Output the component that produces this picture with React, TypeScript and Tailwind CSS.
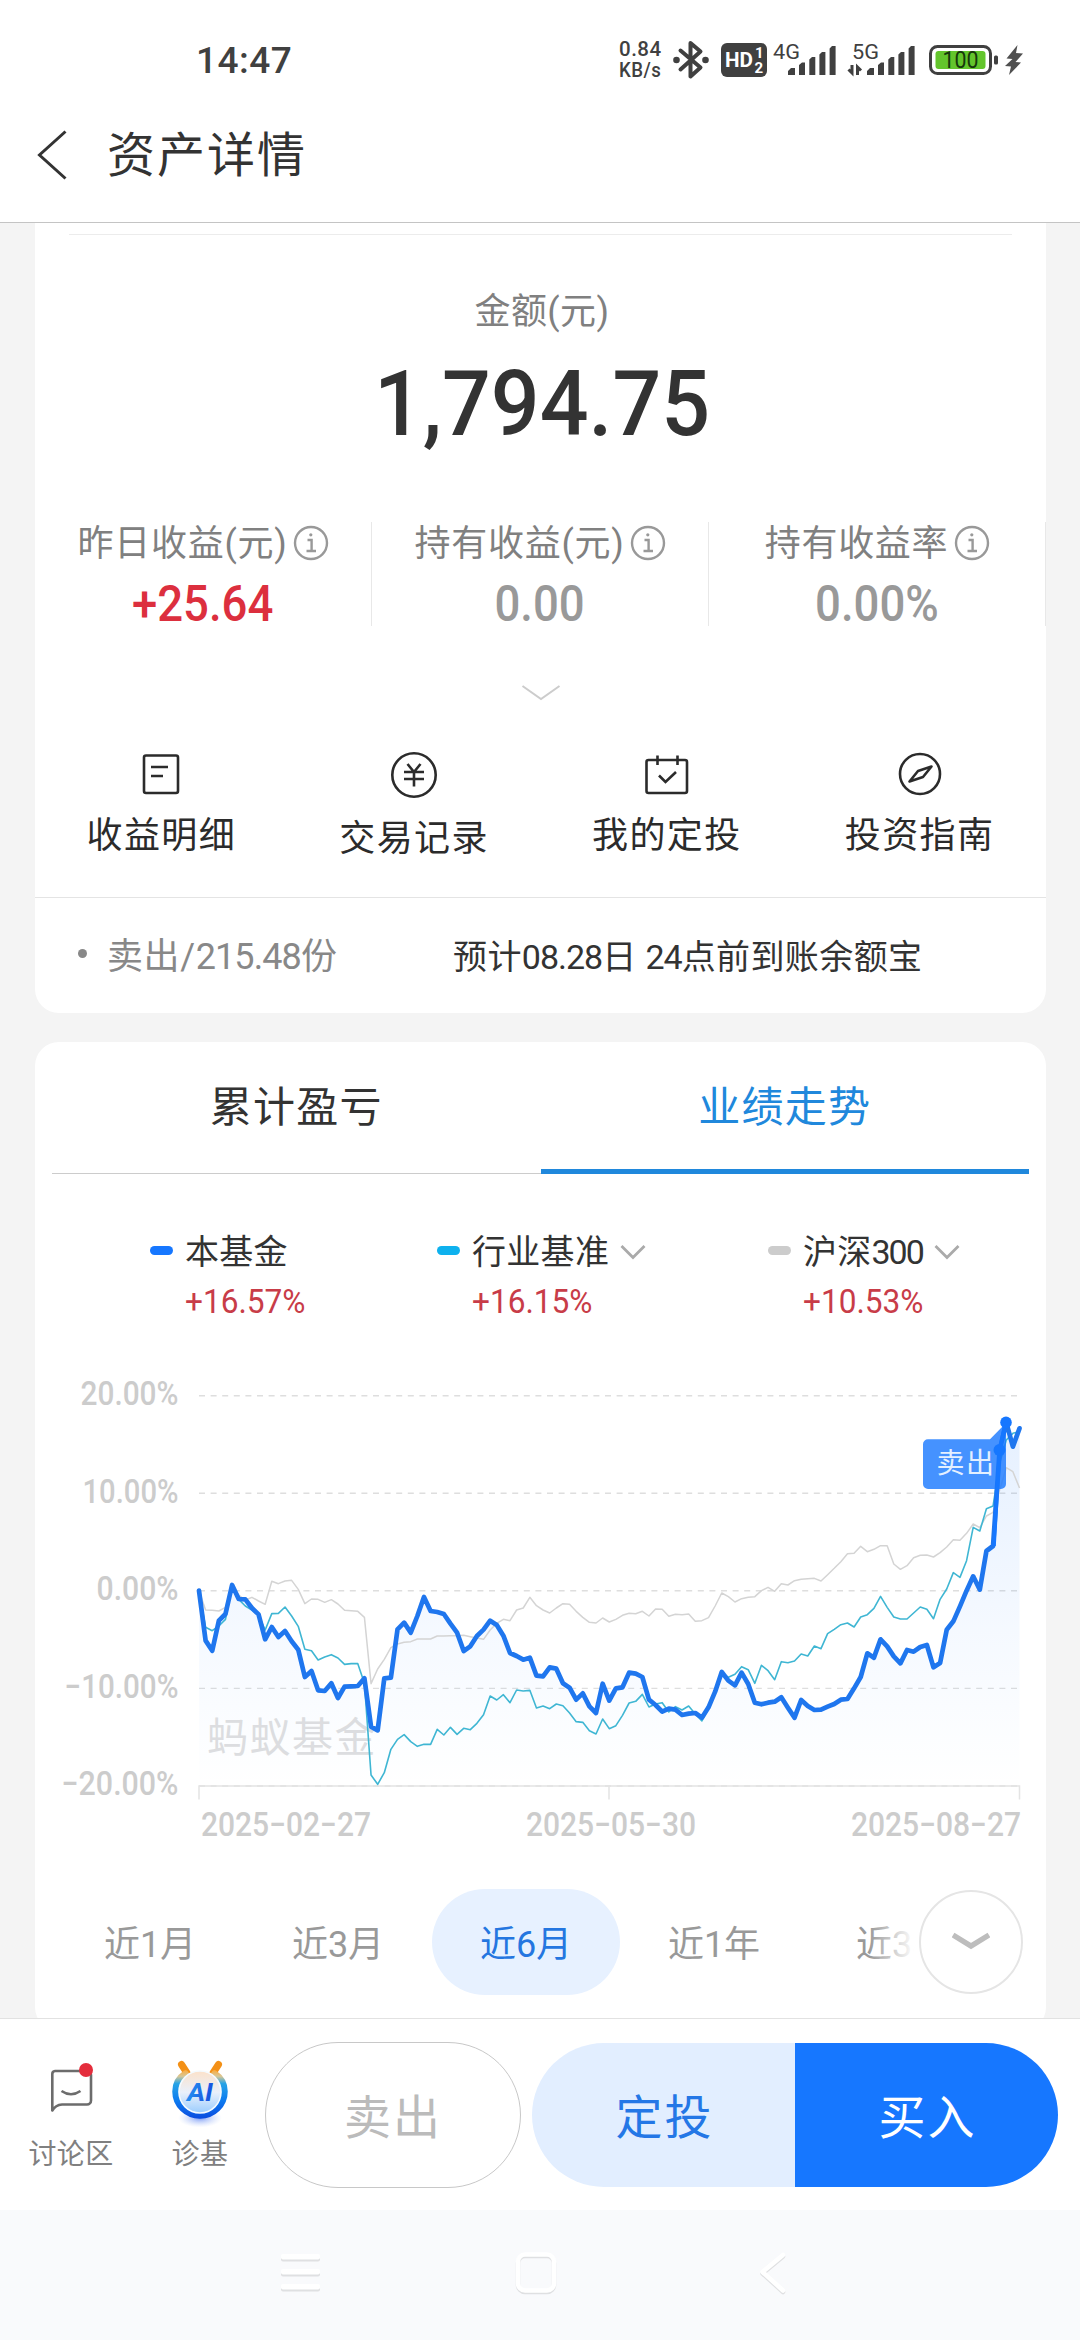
import type { ReactNode } from "react";

const FUND = [
  662, 812, 842, 752, 732, 645, 687, 688, 714, 733, 808, 771, 801, 783, 814, 839, 921, 903, 961, 963, 940, 984, 950,
  949, 948, 925, 1070, 1081, 925, 923, 778, 758, 788, 738, 681, 723, 726, 732, 761, 788, 843, 829, 798, 779, 752, 765,
  797, 849, 858, 869, 863, 917, 919, 892, 896, 940, 953, 989, 970, 1009, 1029, 941, 992, 955, 952, 908, 911, 921, 989,
  1005, 1025, 1016, 1019, 1035, 1031, 1029, 1043, 1012, 965, 906, 932, 946, 908, 942, 998, 1003, 998, 995, 982, 1013,
  1043, 990, 1008, 1020, 1019, 1010, 1002, 989, 987, 955, 921, 850, 863, 808, 829, 859, 880, 840, 845, 831, 825, 892,
  879, 779, 754, 709, 662, 619, 659, 543, 528, 240, 157, 230, 175,
];

const SECTOR = [
  662, 772, 782, 768, 748, 650, 688, 708, 720, 735, 780, 731, 730, 711, 738, 769, 838, 842, 870, 861, 854, 864, 883,
  881, 881, 940, 1215, 1243, 1208, 1138, 1108, 1094, 1115, 1129, 1123, 1123, 1078, 1095, 1072, 1093, 1075, 1079, 1060,
  1034, 978, 990, 974, 998, 960, 963, 961, 1014, 1008, 1016, 1002, 1007, 1029, 1055, 1057, 1082, 1092, 1047, 1076,
  1067, 1036, 999, 994, 973, 1011, 1002, 998, 1026, 1010, 1020, 1008, 1032, 1053, 1015, 968, 908, 922, 913, 890, 899,
  940, 886, 902, 929, 875, 878, 873, 852, 858, 828, 836, 791, 778, 764, 759, 771, 741, 734, 715, 679, 712, 741, 747,
  747, 729, 711, 718, 746, 688, 657, 608, 622, 572, 472, 483, 416, 408, 280, 210, 190, 185,
];

const CSI300 = [
  662, 720, 721, 723, 712, 650, 675, 690, 682, 693, 703, 634, 641, 633, 631, 658, 701, 687, 688, 697, 689, 702, 721,
  722, 724, 742, 941, 897, 868, 833, 822, 817, 815, 807, 807, 807, 798, 798, 797, 797, 796, 800, 804, 808, 780, 760,
  748, 752, 720, 714, 682, 707, 720, 729, 714, 701, 703, 724, 742, 757, 759, 744, 756, 748, 736, 730, 731, 724, 738,
  717, 718, 739, 733, 734, 732, 754, 752, 743, 708, 669, 680, 696, 686, 682, 680, 662, 652, 664, 641, 645, 632, 628,
  626, 625, 633, 614, 595, 575, 551, 550, 529, 545, 538, 527, 527, 582, 598, 587, 563, 556, 555, 561, 548, 531, 509,
  511, 490, 462, 473, 438, 427, 360, 293, 305, 354,
];

const px = (i: number) => (199 + i * 6.617).toFixed(2);
const py = (v: number) => (1370 + v / 3).toFixed(2);
const line = (data: number[]) => data.map((v, i) => `${px(i)},${py(v)}`).join(" ");

function StatusBar() {
  return (
    <div className="flex h-[120px] shrink-0 items-center pr-[56px] pl-[196px] text-[#404040]">
      <span className="text-[37px] leading-none font-medium tracking-[0.5px]">14:47</span>
      <div className="ml-auto flex items-center">
        <div className="mr-[10px] flex w-[44px] flex-col text-[20.5px] leading-[21px] font-medium tracking-[0.5px]">
          <span>0.84</span>
          <span className="origin-left scale-x-[0.91]">KB/s</span>
        </div>
        <svg className="mr-[12px]" width="36" height="40" viewBox="672 39 36 40" fill="none">
          <path
            d="M679.5 49.5 L699.5 66.5 L689.5 75.5 V42 L699.5 50.5 L679.5 68.5"
            stroke="#404040"
            strokeWidth="4"
            strokeLinejoin="round"
            strokeLinecap="round"
          />
          <circle cx="675.5" cy="59" r="3.3" fill="#404040" />
          <circle cx="704.5" cy="59" r="3.3" fill="#404040" />
        </svg>
        <svg className="mr-[6px]" width="46" height="34" viewBox="0 0 46 34" fontFamily="Roboto" fill="#fff">
          <rect width="46" height="34" rx="6" fill="#404040" />
          <text x="4" y="24" fontSize="20" fontWeight="700" textLength="28" lengthAdjust="spacingAndGlyphs">
            HD
          </text>
          <text x="34" y="15" fontSize="15" fontWeight="700">
            1
          </text>
          <text x="33.5" y="30" fontSize="15" fontWeight="700">
            2
          </text>
        </svg>
        <Signal label="4G" />
        <Signal label="5G" arrows />
        <svg className="mr-[5px]" width="70" height="30" viewBox="0 0 70 30">
          <rect x="1.5" y="1.5" width="60" height="27" rx="7" fill="none" stroke="#404040" strokeWidth="3" />
          <rect x="6.5" y="6" width="50" height="18" rx="3" fill="#63c52c" />
          <rect x="65" y="10.5" width="4" height="9" rx="1.5" fill="#404040" />
          <text
            x="13.5"
            y="23"
            fontSize="23"
            fontFamily="Roboto"
            fill="#16380b"
            textLength="36"
            lengthAdjust="spacingAndGlyphs"
          >
            100
          </text>
        </svg>
        <svg width="20" height="30" viewBox="0 0 20 30" fill="#505050">
          <path d="M13.5 0 L2.5 13.5 L8.5 14 L1 21 L7 21.5 L5 30 L17 17.5 L11.5 17 L19 8.5 L12 8 Z" />
        </svg>
      </div>
    </div>
  );
}

function Signal({ label, arrows }: { label: string; arrows?: boolean }) {
  return (
    <svg
      className={arrows ? "mr-[12px]" : "mr-[10px]"}
      width={arrows ? 70 : 64}
      height="46"
      viewBox={arrows ? "-5 36 70 46" : "0 36 64 46"}
      fill="#404040"
    >
      <text x={0} y="57.5" fontSize="20" fontFamily="Roboto" textLength="27" lengthAdjust="spacingAndGlyphs">
        {label}
      </text>
      <path d="M15 74 V70 L18 67 H22 V74Z M26 74 V64 L29 61.5 H32 V74Z M36.3 74 V58.5 L39 56 H42.3 V74Z M46.4 74 V53.5 L49 51 H52.4 V74Z M56.6 74 V47.5 L59 45 H62.6 V74Z" />
      {arrows && (
        <path d="M0 64 V72 L-3.5 68.5 M5.5 74 V66 L9 69.5" stroke="#404040" strokeWidth="3" fill="none" />
      )}
    </svg>
  );
}

function Info() {
  return (
    <svg className="ml-[6px]" width="36" height="36" viewBox="0 0 36 36" fill="none" stroke="#999" strokeWidth="2.4">
      <circle cx="18" cy="18" r="16" />
      <path d="M14.5 15 H18.6 V26 M13.5 26 H23" />
      <circle cx="17.8" cy="9.8" r="1.6" fill="#999" stroke="none" />
    </svg>
  );
}

function Stat({ label, value, tone }: { label: string; value: string; tone: string }) {
  return (
    <div className="flex h-[104px] w-[337px] flex-col items-center border-r border-[#e8e8e8]">
      <div className="flex h-[42px] shrink-0 items-center pl-[1px] text-[36px] leading-none tracking-[0.7px] text-[#808080]">
        <span className="pt-[2px]">{label}</span>
        <Info />
      </div>
      <div className={`mt-[15px] flex h-[50px] shrink-0 scale-x-[0.91] items-center text-[50px] leading-none font-medium ${tone}`}>
        {value}
      </div>
    </div>
  );
}

function Shortcut({ label, children, drop }: { label: string; children: ReactNode; drop?: boolean }) {
  return (
    <div className="flex flex-1 flex-col items-center text-[#2b2b2b]">
      <svg width="50" height="50" viewBox="-25 -25 50 50" fill="none" stroke="#2b2b2b" strokeWidth="2.6">
        {children}
      </svg>
      <span className={`text-[36px] leading-[40px] tracking-[1.4px] ${drop ? "mt-[20px]" : "mt-[17px]"}`}>{label}</span>
    </div>
  );
}

function AssetCard() {
  return (
    <section className="mx-[35px] h-[790px] w-[1011px] shrink-0 rounded-b-[24px] bg-white">
      <div className="mx-[34px] h-[12px] border-b border-[#ececec]" />
      <div className="flex h-[287px] flex-col items-center">
        <div className="mt-[57px] flex h-[40px] items-center pl-[3px] text-[36px] leading-none tracking-[0.4px] text-[#808080]">
          金额(元)
        </div>
        <div className="mt-[28px] ml-[4px] flex h-[90px] scale-x-[0.955] items-center text-[90px] leading-none font-medium text-[#333]">
          1,794.75
        </div>
      </div>
      <div className="flex">
        <Stat label="昨日收益(元)" value="+25.64" tone="text-[#dc2f3e]" />
        <Stat label="持有收益(元)" value="0.00" tone="text-[#999]" />
        <Stat label="持有收益率" value="0.00%" tone="text-[#999]" />
      </div>
      <div className="flex h-[123px] justify-center pt-[58px]">
        <svg width="40" height="18" viewBox="0 0 40 18" fill="none" stroke="#ccc" strokeWidth="2">
          <path d="M1.5 2 L20 15 L38.5 2" />
        </svg>
      </div>
      <div className="flex h-[148px]">
        <Shortcut label="收益明细">
          <rect x="-17" y="-18.5" width="34" height="37.5" rx="2" />
          <path d="M-10 -7 H7 M-10 2 H2" />
        </Shortcut>
        <Shortcut label="交易记录" drop>
          <circle r="21.7" cy="1" />
          <path d="M-6.5 -10 L0 -2 L6.5 -10 M0 -2 V12.5 M-10 -2 H10 M-10 5 H10" />
        </Shortcut>
        <Shortcut label="我的定投">
          <rect x="-20.5" y="-14" width="40.5" height="33" rx="2" />
          <path d="M-9.5 -18.5 V-9 M10.5 -18.5 V-9 M-8 1.5 L-1.5 8 L9 -2" />
        </Shortcut>
        <Shortcut label="投资指南">
          <circle r="20" />
          <path d="M11.5 -7.5 L-2 -3 L-10.5 7.5 L3 3 Z" strokeLinejoin="round" />
        </Shortcut>
      </div>
      <div className="flex h-[116px] items-center border-t border-[#e4e4e4] pt-[3px] leading-none">
        <span className="ml-[43px] size-[9px] -translate-y-[4px] rounded-full bg-[#888]" />
        <span className="ml-[20px] w-[346px] text-[36px] tracking-[0.6px] text-[#888]">
          卖出/<span className="tracking-[-0.9px]">215.48</span>份
        </span>
        <span className="text-[34px] tracking-[0.4px] text-[#333]">
          预计<span className="tracking-[-1px]">08.28</span>日 <span className="tracking-[-1px]">24</span>点前到账余额宝
        </span>
      </div>
    </section>
  );
}

function Legend({
  color,
  name,
  digits,
  value,
  menu,
  className,
}: {
  color: string;
  name: string;
  digits?: string;
  value: string;
  menu?: boolean;
  className: string;
}) {
  return (
    <div className={`flex ${className}`}>
      <span className={`mt-[15px] h-[9px] w-[23px] rounded-full ${color}`} />
      <div className="ml-[12px] flex flex-col">
        <div className="flex h-[42px] items-center text-[34px] leading-none tracking-[0.3px] text-[#333]">
          {name}
          {digits && <span className="tracking-[-2.1px]">{digits}</span>}
          {menu && (
            <svg className="ml-[11px]" width="26" height="18" viewBox="0 0 26 18" fill="none" stroke="#aaa" strokeWidth="2.8">
              <path d="M1.5 3 L13 14.5 L24.5 3" />
            </svg>
          )}
        </div>
        <span className="mt-[8px] inline-block w-[120px] origin-left scale-x-[0.93] text-[34px] leading-[40px] text-[#c83c48]">
          {value}
        </span>
      </div>
    </div>
  );
}

const GRID = [1395.7, 1493.3, 1590.8, 1688.4, 1786];
const Y_LABELS = [
  { t: "20.00%", w: 98 },
  { t: "10.00%", w: 96 },
  { t: "0.00%", w: 82 },
  { t: "−10.00%", w: 114 },
  { t: "−20.00%", w: 117 },
];
const X_LABELS = [
  { t: "2025−02−27", x: 201 },
  { t: "2025−05−30", x: 526 },
  { t: "2025−08−27", x: 851 },
];

function Chart() {
  return (
    <svg className="block" width="1011" height="480" viewBox="35 1370 1011 480" fontFamily="Roboto, 'Noto Sans CJK SC', sans-serif">
      <defs>
        <linearGradient id="fill" x1="0" y1="1422" x2="0" y2="1786" gradientUnits="userSpaceOnUse">
          <stop offset="0" stopColor="#1677ff" stopOpacity="0.11" />
          <stop offset="0.6" stopColor="#1677ff" stopOpacity="0.04" />
          <stop offset="1" stopColor="#1677ff" stopOpacity="0" />
        </linearGradient>
      </defs>
      {GRID.map((y) => (
        <line key={y} x1="199" x2="1019.5" y1={y} y2={y} stroke="#dedede" strokeWidth="1.4" strokeDasharray="6 5.6" />
      ))}
      <path d="M199 1799.5 V1786 H1019.5 V1799.5 M609 1786 V1799.5" stroke="#e4e4e4" strokeWidth="1.5" fill="none" />
      {Y_LABELS.map((l, i) => (
        <text
          key={l.t}
          x={178.5 - l.w}
          y={GRID[i] + 9.3}
          fontSize="33"
          fontWeight="500"
          fill="#ccc"
          textLength={l.w}
          lengthAdjust="spacingAndGlyphs"
        >
          {l.t}
        </text>
      ))}
      {X_LABELS.map((l) => (
        <text
          key={l.t}
          x={l.x}
          y="1835.5"
          fontSize="33"
          fontWeight="500"
          fill="#ccc"
          textLength="170"
          lengthAdjust="spacingAndGlyphs"
        >
          {l.t}
        </text>
      ))}
      <polygon points={`199,1786 ${line(FUND)} 1019.5,1786`} fill="url(#fill)" />
      <text x="207" y="1751.5" fontSize="41" letterSpacing="1.5" fill="#dcdde0">
        蚂蚁基金
      </text>
      <polyline points={line(CSI300)} fill="none" stroke="#d4d4d4" strokeWidth="1.5" strokeLinejoin="round" />
      <polyline points={line(SECTOR)} fill="none" stroke="#3fb6d3" strokeWidth="1.6" strokeLinejoin="round" />
      <polyline
        points={line(FUND)}
        fill="none"
        stroke="#1f76ee"
        strokeWidth="4.7"
        strokeLinejoin="round"
        strokeLinecap="round"
      />
      <path
        d="M928 1439.3 H990 L1006 1423 V1484 a5 5 0 0 1 -5 5 H928 a5 5 0 0 1 -5 -5 V1444.3 a5 5 0 0 1 5 -5Z"
        fill="#1677ff"
        fillOpacity="0.8"
      />
      <text x="936.5" y="1473" fontSize="28" letterSpacing="1.6" fill="#e4f0ff">
        卖出
      </text>
      <path d={`M994 1546 L${px(121)} 1450 L1005 1424`} stroke="#1677ff" strokeWidth="3.6" fill="none" />
      <circle cx="999.5" cy="1450" r="6" fill="#1677ff" />
      <circle cx="1006" cy="1422.4" r="5.8" fill="#1677ff" />
    </svg>
  );
}

function PerformanceCard() {
  return (
    <section className="mx-[35px] mt-[29px] h-[989px] w-[1011px] shrink-0 rounded-[24px] bg-white">
      <div className="mx-[17px] flex h-[132px] text-[42px] leading-none tracking-[1.2px]">
        <div className="flex flex-1 items-center justify-center border-b border-[#ccc] pt-[1px] text-[#333]">累计盈亏</div>
        <div className="flex flex-1 items-center justify-center border-b-[5px] border-[#2088dc] pt-[5px] text-[#2088dc]">
          业绩走势
        </div>
      </div>
      <div className="flex h-[196px] pt-[57px]">
        <Legend className="ml-[115px] w-[287px]" color="bg-[#1677ff]" name="本基金" value="+16.57%" />
        <Legend className="w-[331px]" color="bg-[#0eb1ee]" name="行业基准" value="+16.15%" menu />
        <Legend className="" color="bg-[#ccc]" name="沪深" digits="300" value="+10.53%" menu />
      </div>
      <Chart />
      <div className="relative mt-[39px] flex h-[106px] items-center text-[36px] leading-none text-[#999]">
        <div className="flex w-[1011px] pl-[21px]">
          <Range label="近1月" />
          <Range label="近3月" />
          <Range label="近6月" active />
          <Range label="近1年" />
          <Range label="近3年" />
        </div>
        <div className="absolute top-0 left-[834px] h-full w-[130px] bg-linear-to-r from-white/0 to-white to-35%" />
        <div className="absolute top-[1px] left-[884px] flex size-[104px] items-center justify-center rounded-full border-2 border-[#e5e5e5] bg-white">
          <svg width="38" height="22" viewBox="0 0 38 22" fill="none" stroke="#bdbdbd" strokeWidth="5.5">
            <path d="M1 4 L19 15 L37 4" />
          </svg>
        </div>
      </div>
    </section>
  );
}

function Range({ label, active }: { label: string; active?: boolean }) {
  return (
    <div
      className={`flex h-[106px] w-[188px] shrink-0 items-center justify-center rounded-full pt-[5px] ${
        active ? "bg-[#e7f1ff] text-[#2476e0]" : ""
      }`}
    >
      {label}
    </div>
  );
}

function ActionBar() {
  return (
    <footer className="flex h-[192px] shrink-0 border-t border-[#e2e2e2] bg-white leading-none">
      <div className="ml-[21px] flex w-[100px] flex-col items-center pt-[40px] text-[28px] text-[#808080]">
        <svg width="60" height="68" viewBox="41 2059 60 68" fill="none">
          <path
            d="M55 2071 H87 a4 4 0 0 1 4 4 V2100.5 a4 4 0 0 1 -4 4 H62 Q55.5 2105 52.3 2110.5 V2074 a3 3 0 0 1 2.7 -3Z"
            stroke="#6c6c6c"
            strokeWidth="2.6"
            strokeLinejoin="round"
          />
          <path d="M61.5 2091 Q71 2097.5 80.5 2091" stroke="#6c6c6c" strokeWidth="2.6" />
          <circle cx="86" cy="2070" r="7" fill="#e42d3c" />
        </svg>
        <span className="mt-[14px] tracking-[0.4px]">讨论区</span>
      </div>
      <div className="ml-[29px] flex w-[100px] flex-col items-center pt-[40px] text-[28px] text-[#808080]">
        <svg width="60" height="68" viewBox="170 2060 60 68" fill="none">
          <defs>
            <linearGradient id="ring" x1="0" y1="2070" x2="0" y2="2122" gradientUnits="userSpaceOnUse">
              <stop offset="0" stopColor="#ffa52e" />
              <stop offset="0.14" stopColor="#d9c795" />
              <stop offset="0.28" stopColor="#27a4e6" />
              <stop offset="0.6" stopColor="#0d7cf0" />
              <stop offset="1" stopColor="#0b46dd" />
            </linearGradient>
            <linearGradient id="glass" x1="0" y1="2074" x2="0" y2="2117" gradientUnits="userSpaceOnUse">
              <stop offset="0" stopColor="#fae3cf" />
              <stop offset="0.45" stopColor="#e9f0fb" />
              <stop offset="1" stopColor="#90c8ff" />
            </linearGradient>
            <radialGradient id="glow">
              <stop offset="0" stopColor="#7d9cf5" />
              <stop offset="1" stopColor="#c9d8fb" stopOpacity="0" />
            </radialGradient>
            <linearGradient id="ai" x1="0" y1="0" x2="1" y2="0.3">
              <stop offset="0" stopColor="#2ba3f7" />
              <stop offset="1" stopColor="#1650de" />
            </linearGradient>
          </defs>
          <ellipse cx="200" cy="2119" rx="22" ry="9.5" fill="url(#glow)" />
          <path d="M181.5 2065.5 L187 2074 M218.5 2065.5 L213 2074" stroke="#f39016" strokeWidth="7" strokeLinecap="round" />
          <path
            d="M185.5 2074.5 Q175.5 2081 175.5 2092.5 A24.5 24 0 0 0 224.5 2092.5 Q224.5 2081 214.5 2074.5"
            stroke="url(#ring)"
            strokeWidth="6.5"
            strokeLinecap="round"
          />
          <circle cx="200" cy="2093" r="21" fill="url(#glass)" stroke="#f4faff" strokeWidth="1.6" />
          <text
            x="187"
            y="2102"
            fontSize="26"
            fontFamily="Roboto"
            fontWeight="700"
            fontStyle="italic"
            fill="url(#ai)"
            textLength="26"
            lengthAdjust="spacingAndGlyphs"
          >
            AI
          </text>
        </svg>
        <span className="mt-[14px] tracking-[0.4px]">诊基</span>
      </div>
      <div className="mt-[23px] ml-[15px] flex h-[146px] w-[256px] items-center justify-center rounded-full border border-[#c8c8c8] pt-[4px] text-[47px] tracking-[2px] text-[#bbb]">
        卖出
      </div>
      <div className="mt-[24px] ml-[11px] flex h-[144px] w-[526px] overflow-hidden rounded-full text-[47px] tracking-[2px]">
        <div className="flex flex-1 items-center justify-center bg-[#e2eeff] pt-[4px] pl-[2px] text-[#2477e6]">定投</div>
        <div className="flex flex-1 items-center justify-center bg-[#1677ff] pt-[4px] pl-[2px] text-white">买入</div>
      </div>
    </footer>
  );
}

function NavBar() {
  return (
    <div className="flex h-[130px] shrink-0 items-start bg-[#f9fafc] pt-[38px]">
      <svg className="ml-[276px]" width="50" height="52" viewBox="276 2248 50 52">
        {[2254, 2269, 2284].map((y) => (
          <g key={y}>
            <rect x="281" y={y + 2} width="39" height="5.5" rx="2" fill="#dfe0e2" />
            <rect x="281" y={y} width="39" height="5.5" rx="2" fill="#fff" />
          </g>
        ))}
      </svg>
      <svg className="ml-[185px]" width="50" height="52" viewBox="511 2248 50 52" fill="none" strokeWidth="4.5">
        <rect x="518" y="2256" width="36" height="36" rx="7" stroke="#dfe0e2" />
        <rect x="518" y="2254.5" width="36" height="36" rx="7" stroke="#fff" />
      </svg>
      <svg
        className="ml-[187px]"
        width="50"
        height="52"
        viewBox="748 2248 50 52"
        fill="none"
        strokeWidth="4.5"
        strokeLinecap="round"
        strokeLinejoin="round"
      >
        <path d="M783 2256.5 L762.5 2273.5 L783 2292" stroke="#dfe0e2" />
        <path d="M783 2255 L762.5 2272 L783 2290.5" stroke="#fff" />
      </svg>
    </div>
  );
}

export default function App() {
  return (
    <div className="flex h-[2340px] w-[1080px] flex-col overflow-hidden bg-white font-[Roboto,'Noto_Sans_CJK_SC',sans-serif]">
      <StatusBar />
      <header className="flex h-[103px] shrink-0 items-start border-b border-[#c4c4c4] text-[#333]">
        <svg className="mt-[9px] ml-[36px]" width="34" height="52" viewBox="36 129 34 52" fill="none" stroke="#333" strokeWidth="3">
          <path d="M65.5 131.5 L39.5 155 L65.5 178.5" />
        </svg>
        <h1 className="mt-[11px] ml-[37px] text-[48px] leading-[50px] tracking-[2px]">资产详情</h1>
      </header>
      <main className="flex h-[1795px] shrink-0 flex-col overflow-hidden bg-[#f4f4f4]">
        <AssetCard />
        <PerformanceCard />
      </main>
      <ActionBar />
      <NavBar />
    </div>
  );
}
